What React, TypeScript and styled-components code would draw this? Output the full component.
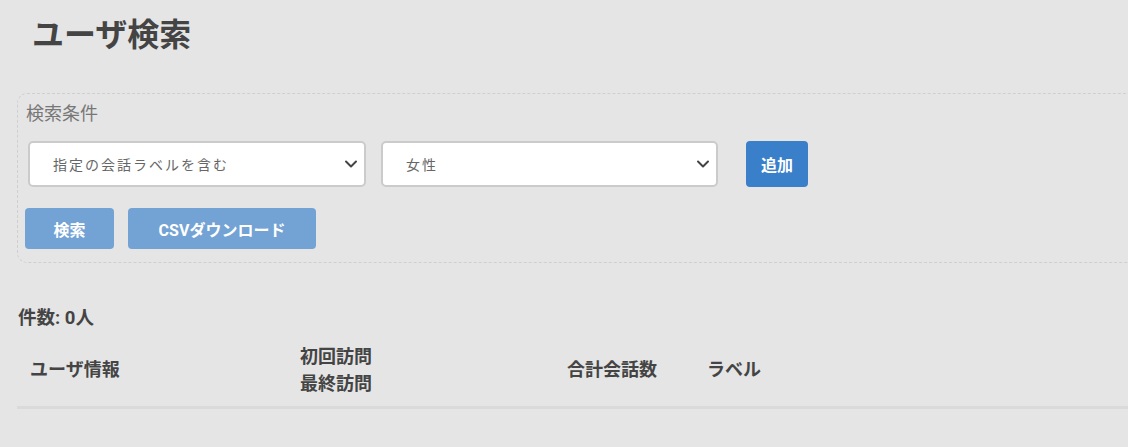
import React from "react";
import styled, { createGlobalStyle } from "styled-components";

const Global = createGlobalStyle`
  html, body { margin: 0; padding: 0; background: #e5e5e5; overflow: hidden; }
  body { font-family: "Roboto", "Noto Sans CJK JP", sans-serif; color: #444; }
`;

const Page = styled.div`
  width: 1128px;
  height: 447px;
  padding: 0 0 0 17px;
  box-sizing: border-box;
  overflow: hidden;
`;

const Title = styled.h1`
  margin: 0;
  padding: 14px 0 0 15px;
  height: 93px;
  box-sizing: border-box;
  font-size: 32px;
  line-height: 42px;
  font-weight: 700;
  color: #444;
`;

const Panel = styled.section`
  width: 1140px;
  height: 170px;
  box-sizing: border-box;
  border: 1px dashed #cfcfcf;
  border-radius: 10px;
  padding: 7px 7px 0 7px;
`;

const PanelLabel = styled.div`
  font-size: 18px;
  line-height: 26px;
  color: #777;
  font-weight: 400;
  padding-left: 1px;
`;

const Row = styled.div`
  display: flex;
  align-items: center;
  gap: ${(p: { $gap: number }) => p.$gap}px;
`;

const ConditionRow = styled(Row)`
  margin-top: 14px;
  padding-left: 3px;
`;

const ActionRow = styled(Row)`
  margin-top: 21px;
`;

const SelectBox = styled.div`
  position: relative;
  width: ${(p: { $w: number }) => p.$w}px;
  height: 46px;
  box-sizing: border-box;
  background: #fff;
  border: 2px solid #cbcbcb;
  border-radius: 5px;
  display: flex;
  align-items: center;
  padding-left: 23px;
  font-size: 14px;
  letter-spacing: 2px;
  color: #666;
`;

const Chevron = styled.svg`
  position: absolute;
  right: 6px;
  top: 50%;
  margin-top: -5px;
`;

const Button = styled.button<{ $w: number; $h: number; $bg: string }>`
  width: ${(p) => p.$w}px;
  height: ${(p) => p.$h}px;
  background: ${(p) => p.$bg};
  border: none;
  border-radius: 4px;
  color: #fff;
  font-family: "Roboto", "Noto Sans CJK JP", sans-serif;
  font-size: 16px;
  font-weight: 700;
  padding: 0;
  cursor: pointer;
`;

const AddButton = styled(Button)`
  margin-left: 13px;
`;

const Count = styled.div`
  margin-top: 41px;
  font-size: 18.5px;
  line-height: 28px;
  font-weight: 700;
  color: #444;
  padding-left: 1px;
`;

const TableHead = styled.div`
  margin-top: 9px;
  width: 1140px;
  height: 68px;
  display: grid;
  grid-template-columns: 270px 267px 140px 1fr;
  align-items: center;
  border-bottom: 3px solid #dadada;
  padding: 0 0 8px 13px;
  box-sizing: border-box;
`;

const HeadCell = styled.div`
  font-size: 18px;
  line-height: 27px;
  font-weight: 700;
  color: #444;
`;

const ChevronIcon = () => (
  <Chevron width="14" height="10" viewBox="0 0 14 10">
    <path d="M2 2.5 L7 7.5 L12 2.5" fill="none" stroke="#444" strokeWidth="2" strokeLinecap="round" strokeLinejoin="round" />
  </Chevron>
);

export default function App() {
  return (
    <Page>
      <Global />
      <Title>ユーザ検索</Title>
      <Panel>
        <PanelLabel>検索条件</PanelLabel>
        <ConditionRow $gap={15}>
          <SelectBox $w={338}>
            指定の会話ラベルを含む
            <ChevronIcon />
          </SelectBox>
          <SelectBox $w={337}>
            女性
            <ChevronIcon />
          </SelectBox>
          <AddButton $w={62} $h={46} $bg="#3a7fc9">追加</AddButton>
        </ConditionRow>
        <ActionRow $gap={14}>
          <Button $w={89} $h={41} $bg="#73a3d4">検索</Button>
          <Button $w={188} $h={41} $bg="#73a3d4">CSVダウンロード</Button>
        </ActionRow>
      </Panel>
      <Count>件数: 0人</Count>
      <TableHead>
        <HeadCell>ユーザ情報</HeadCell>
        <HeadCell>
          初回訪問
          <br />
          最終訪問
        </HeadCell>
        <HeadCell>合計会話数</HeadCell>
        <HeadCell>ラベル</HeadCell>
      </TableHead>
    </Page>
  );
}
